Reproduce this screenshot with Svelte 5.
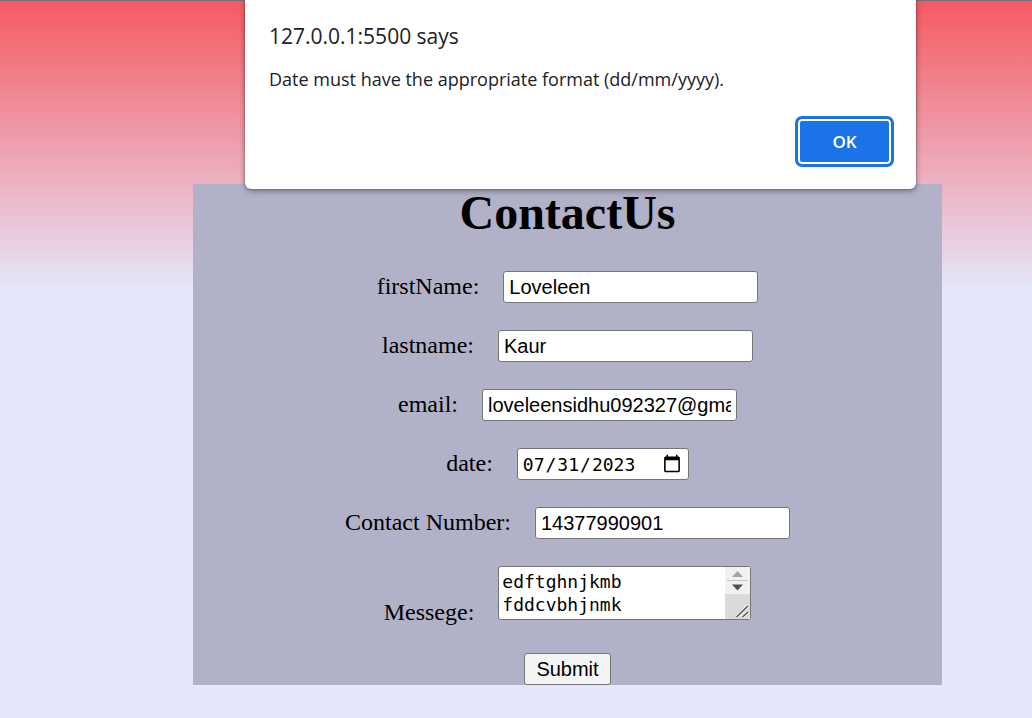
<script>
  let form = $state({
    firstName: 'Loveleen',
    lastname: 'Kaur',
    email: 'loveleensidhu092327@gmail.com',
    date: '2023-07-31',
    phone: '14377990901',
    message: 'edftghnjkmb\nfddcvbhjnmk'
  });
  let open = $state(true);
</script>

<div class="page">
  <form class="card" onsubmit={(e) => { e.preventDefault(); open = true; }}>
    <h1>ContactUs</h1>
    <div class="row">
      <label for="firstName">firstName:</label>
      <input id="firstName" type="text" bind:value={form.firstName} />
    </div>
    <div class="row">
      <label for="lastname">lastname:</label>
      <input id="lastname" type="text" bind:value={form.lastname} />
    </div>
    <div class="row">
      <label for="email">email:</label>
      <input id="email" type="text" bind:value={form.email} />
    </div>
    <div class="row">
      <label for="date">date:</label>
      <input id="date" class="date" type="date" bind:value={form.date} />
    </div>
    <div class="row">
      <label for="phone">Contact Number:</label>
      <input id="phone" type="text" bind:value={form.phone} />
    </div>
    <div class="row message">
      <label for="message">Messege:</label>
      <div class="area">
        <textarea id="message" rows="2" bind:value={form.message}></textarea>
        <svg class="scroll" width="25" height="52" viewBox="0 0 25 52" aria-hidden="true">
          <rect width="25" height="52" fill="#dadada" />
          <rect width="25" height="27" fill="#f1f1f1" />
          <path d="M2 13.5H23" stroke="#c4c4c4" />
          <path d="M7 10L12.500 4L18 10Z" fill="#a3a3a3" />
          <path d="M7 17.500H18L12.500 23.500Z" fill="#505050" />
          <path d="M11.500 50L23 39M17.500 50L23 45" fill="none" stroke="#fff" stroke-width="3" />
          <path d="M11.500 50L23 39M17.500 50L23 45" fill="none" stroke="#505050" stroke-width="1.500" />
        </svg>
      </div>
    </div>
    <button class="submit" type="submit">Submit</button>
  </form>

  {#if open}
    <div class="dialog" role="alertdialog" aria-labelledby="title" aria-describedby="text">
      <h2 id="title">127.0.0.1:5500 says</h2>
      <p id="text">Date must have the appropriate format (dd/mm/yyyy).</p>
      <button class="ok" type="button" onclick={() => (open = false)}>OK</button>
    </div>
  {/if}
</div>

<style>
  :global(body) {
    margin: 0;
    background: #e6e6fa;
  }
  * {
    box-sizing: border-box;
  }
  .page {
    position: relative;
    min-height: 100vh;
    padding: 183px 90px 33px 193px;
    border-top: 1px solid #766c7c;
    background: linear-gradient(#f65a62, #e6e6fa 288px);
    font-family: "Liberation Serif", "Times New Roman", serif;
    font-size: 24px;
    line-height: 27px;
    color: #000;
  }
  .card {
    display: flex;
    flex-direction: column;
    align-items: center;
    gap: 27px;
    background: #b1b1c8;
  }
  h1 {
    margin: 0 0 3px;
    font-size: 48px;
    line-height: 57px;
  }
  .row {
    display: flex;
    align-items: center;
    justify-content: center;
    gap: 24px;
  }
  .row label {
    padding-bottom: 2px;
  }
  input,
  textarea,
  .submit {
    margin: 0;
    border: 1px solid #767676;
    border-radius: 3px;
    color: #000;
    outline: none;
  }
  input {
    width: 255px;
    height: 32px;
    padding: 0 5px;
    background: #fff;
    font: 20px "Liberation Sans", Arial, sans-serif;
  }
  .date {
    width: 172px;
    padding: 0 4px;
    font: 18px "DejaVu Sans Mono", monospace;
  }
  .date::-webkit-calendar-picker-indicator {
    width: 20px;
    height: 20px;
  }
  .message {
    align-items: flex-end;
  }
  .message label {
    padding-bottom: 0;
  }
  .area {
    position: relative;
    display: flex;
    margin-bottom: 6px;
  }
  textarea {
    width: 253px;
    height: 54px;
    padding: 3px 28px 3px 3px;
    background: #fff;
    font: 18px/23px "DejaVu Sans Mono", monospace;
    overflow: hidden;
    resize: none;
  }
  .scroll {
    position: absolute;
    top: 1px;
    right: 1px;
  }
  .submit {
    height: 32px;
    padding: 0 11px;
    background: #f4f4f4;
    font: 20px "Liberation Sans", Arial, sans-serif;
  }
  .dialog {
    position: absolute;
    top: -1px;
    left: 245px;
    right: 116px;
    display: flex;
    flex-direction: column;
    padding: 20px 22px 22px 24px;
    border-radius: 0 0 6px 6px;
    background: #fff;
    box-shadow: 0 0 2px rgba(0, 0, 0, 0.5), 0 2px 6px rgba(0, 0, 0, 0.35);
    color: #202124;
    font-family: "Open Sans", "Segoe UI", sans-serif;
  }
  h2 {
    margin: 0;
    font-size: 21px;
    font-weight: 400;
    line-height: 32px;
  }
  p {
    margin: 14px 0 24px;
    font-size: 18px;
    line-height: 26px;
  }
  .ok {
    align-self: flex-end;
    width: 99px;
    height: 51px;
    border: 3px solid #1a73e8;
    border-radius: 7px;
    background: #1a73e8;
    box-shadow: inset 0 0 0 2px #fff;
    color: #fff;
    font: 600 17px "Open Sans", "Segoe UI", sans-serif;
  }
</style>
